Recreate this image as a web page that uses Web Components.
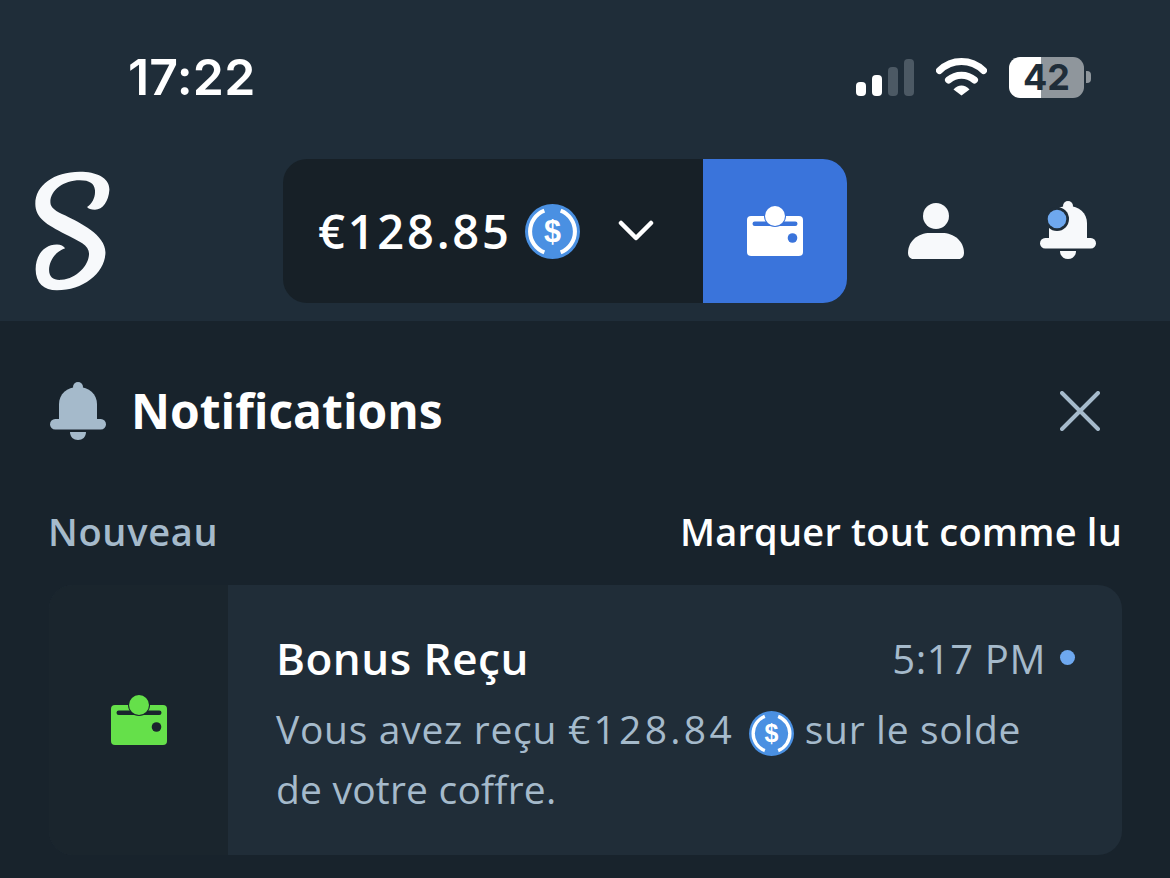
<!DOCTYPE html>
<html lang="fr">
<head>
<meta charset="utf-8">
<title>Notifications</title>
<style>
  html, body { margin: 0; background: #18232c; }
  body { font-family: "Open Sans", "Liberation Sans", sans-serif; width: 1170px; height: 878px; overflow: hidden; }
</style>
</head>
<body>
<app-screen>
  <status-bar></status-bar>
  <top-nav></top-nav>
  <notification-panel>
    <notification-card title="Bonus Reçu" time="5:17 PM">
      <div>Vous avez reçu <span style="letter-spacing:3.300px">€128.84</span> <usdc-icon size="45" style="margin-left:3px"></usdc-icon> sur le solde</div>
      <div style="letter-spacing:.2px">de votre coffre.</div>
    </notification-card>
  </notification-panel>
</app-screen>

<script>
class AppScreen extends HTMLElement {
  connectedCallback() {
    this.attachShadow({ mode: "open" });
    this.shadowRoot.innerHTML = `
      <style>
        :host { display: flex; flex-direction: column; width: 1170px; height: 878px; }
      </style>
      <slot></slot>
    `;
  }
}

class StatusBar extends HTMLElement {
  connectedCallback() {
    this.attachShadow({ mode: "open" });
    this.shadowRoot.innerHTML = `
      <style>
        :host { display: flex; align-items: flex-start; justify-content: space-between; height: 159px; box-sizing: border-box; padding: 47px 79px 0 128px; background: #1f2d39; color: #fff; }
        .time { font: 600 50px/60px Inter, "Liberation Sans", sans-serif; letter-spacing: .2px; }
        .icons { display: flex; align-items: flex-start; margin-top: 10px; }
        .signal { display: flex; align-items: flex-end; gap: 6px; height: 37px; margin-top: 2px; }
        .signal i { display: block; width: 10px; border-radius: 4px; background: #4c5964; }
        .signal i.on { background: #fff; }
        svg { display: block; margin-left: 22px; }
        .battery { display: flex; align-items: center; justify-content: center; width: 75px; height: 41px; margin-left: 22px; border-radius: 11px; background: linear-gradient(90deg, #fff 32px, #8f969c 32px); color: #1f2d39; font: 700 36px/41px Inter, "Liberation Sans", sans-serif; }
        .nub { width: 5px; height: 12px; margin: 14px 0 0 2px; border-radius: 0 4px 4px 0; background: #8f969c; }
      </style>
      <div class="time">17:22</div>
      <div class="icons">
        <div class="signal">
          <i class="on" style="height:14px"></i>
          <i class="on" style="height:21px"></i>
          <i style="height:29px"></i>
          <i style="height:37px"></i>
        </div>
        <svg width="51" height="39" viewBox="0 0 51 39" fill="none" stroke="#fff" stroke-width="7" stroke-linecap="round">
          <path d="M3.500 13.500C16 1.500 35 1.500 47.500 13.500"/>
          <path d="M12.500 23C20 16.500 31 16.500 38.500 23"/>
          <path d="M17.500 32.500C22 27 29 27 33.500 32.500L25.500 38.500Z" fill="#fff" stroke="none"/>
        </svg>
        <div class="battery">42</div>
        <div class="nub"></div>
      </div>
    `;
  }
}

class UsdcIcon extends HTMLElement {
  connectedCallback() {
    const size = this.getAttribute("size") || 54;
    this.attachShadow({ mode: "open" });
    this.shadowRoot.innerHTML = `
      <style>
        :host { display: inline-block; width: ${size}px; height: ${size}px; vertical-align: middle; line-height: 0; letter-spacing: 0; }
        svg { display: block; width: 100%; height: 100%; }
        text { font: 700 30px "Liberation Sans", sans-serif; fill: #fff; }
      </style>
      <svg viewBox="0 0 54 54">
        <circle cx="27" cy="27" r="27" fill="#4a90e2"/>
        <path d="M19 6.500A22 22 0 0 0 19 47.500M35 6.500A22 22 0 0 1 35 47.500" fill="none" stroke="#fff" stroke-width="4"/>
        <text x="27" y="37.500" text-anchor="middle">$</text>
      </svg>
    `;
  }
}

class WalletIcon extends HTMLElement {
  connectedCallback() {
    const color = this.getAttribute("color") || "#fff";
    const cut = this.getAttribute("cut") || "#3a74db";
    this.attachShadow({ mode: "open" });
    this.shadowRoot.innerHTML = `
      <style>
        :host { display: block; width: 56px; height: 50px; }
        svg { display: block; }
      </style>
      <svg width="56" height="50" viewBox="0 0 56 50">
        <rect x="0" y="10" width="56" height="40" rx="4" fill="${color}"/>
        <rect x="5.500" y="15.500" width="45" height="4.500" rx="2.200" fill="${cut}"/>
        <circle cx="28" cy="10" r="11" fill="${cut}"/>
        <circle cx="28" cy="10" r="10" fill="${color}"/>
        <circle cx="45.500" cy="32" r="4.800" fill="${cut}"/>
      </svg>
    `;
  }
}

class BellIcon extends HTMLElement {
  connectedCallback() {
    const color = this.getAttribute("color") || "#fff";
    const badge = this.hasAttribute("badge");
    this.attachShadow({ mode: "open" });
    this.shadowRoot.innerHTML = `
      <style>
        :host { display: block; width: 56px; height: 58px; }
        svg { display: block; }
      </style>
      <svg width="56" height="58" viewBox="0 0 56 58" fill="${color}">
        <circle cx="28" cy="5" r="5"/>
        <path d="M9 41V22C9 12 17 5 28 5C39 5 47 12 47 22V41Z"/>
        <rect x="0" y="37" width="56" height="10.500" rx="5.200"/>
        <path d="M20 50H36C36 55 32.500 58 28 58C23.500 58 20 55 20 50Z"/>
        ${badge ? `<circle cx="17" cy="18" r="12" fill="#1f2d39"/><circle cx="17" cy="18" r="9.300" fill="#6ea8ef"/>` : ""}
      </svg>
    `;
  }
}

class TopNav extends HTMLElement {
  connectedCallback() {
    this.attachShadow({ mode: "open" });
    this.shadowRoot.innerHTML = `
      <style>
        :host { display: flex; align-items: flex-start; height: 162px; background: #1f2d39; box-sizing: border-box; padding-left: 34px; }
        .logo { display: block; width: 77px; height: 122px; margin-top: 11px; }
        balance-pill { margin-left: 172px; }
        .person { display: block; margin: 44px 0 0 61px; }
        bell-icon { margin: 42px 0 0 76px; }
      </style>
      <svg class="logo" viewBox="100 60 235 366">
        <path fill="#f7f9fb" d="M240 62C290 62 332 80 330 118C328 152 310 178 286 178C274 178 266 176 262 170C278 160 288 140 286 118C284 98 270 88 240 88C190 88 150 118 150 155C150 172 166 182 196 196C240 218 320 256 318 310C316 372 250 424 170 424C130 424 105 402 105 360C105 318 130 284 170 284C182 284 190 288 195 296C170 304 146 330 146 362C146 384 160 394 184 392C232 388 268 346 268 312C268 286 238 274 194 252C140 224 104 204 104 160C104 104 160 62 240 62Z"/>
      </svg>
      <balance-pill></balance-pill>
      <svg class="person" width="56" height="56" viewBox="0 0 56 56" fill="#f7f9fb">
        <circle cx="28" cy="13" r="13"/>
        <path d="M0 50C0 38 10 30 22 30H34C46 30 56 38 56 50C56 53 54 56 51 56H5C2 56 0 53 0 50Z"/>
      </svg>
      <bell-icon badge color="#f7f9fb"></bell-icon>
    `;
  }
}

class BalancePill extends HTMLElement {
  connectedCallback() {
    this.attachShadow({ mode: "open" });
    this.shadowRoot.innerHTML = `
      <style>
        :host { display: flex; width: 564px; height: 144px; border-radius: 24px; overflow: hidden; background: #172027; }
        .amount { display: flex; align-items: center; width: 420px; box-sizing: border-box; padding-left: 35px; color: #fff; font-weight: 600; font-size: 47px; }
        .amount span { width: 192px; flex: none; white-space: nowrap; letter-spacing: 2.800px; }
        usdc-icon { margin-left: 15px; }
        .chevron { display: block; margin-left: 38px; }
        .wallet { display: flex; align-items: center; justify-content: center; width: 144px; background: #3a74db; }
      </style>
      <div class="amount">
        <span>€128.85</span>
        <usdc-icon size="55"></usdc-icon>
        <svg class="chevron" width="36" height="22" viewBox="0 0 36 22" fill="none" stroke="#fff" stroke-width="4.500" stroke-linecap="round" stroke-linejoin="round">
          <path d="M3 3L18 18L33 3"/>
        </svg>
      </div>
      <div class="wallet"><wallet-icon></wallet-icon></div>
    `;
  }
}

class NotificationPanel extends HTMLElement {
  connectedCallback() {
    this.attachShadow({ mode: "open" });
    this.shadowRoot.innerHTML = `
      <style>
        :host { display: block; flex: 1; box-sizing: border-box; padding: 60px 48px 0 49px; background: #18232c; }
        .head { display: flex; align-items: center; height: 60px; }
        bell-icon { margin-left: 1px; }
        h1 { flex: 1; margin: 0 0 0 25px; color: #fff; font-size: 48px; font-weight: 700; line-height: 60px; }
        .close { display: block; margin-right: 22px; }
        .sub { display: flex; justify-content: space-between; margin: 70px 0 34px; font-size: 38px; line-height: 40px; font-weight: 600; letter-spacing: .2px; }
        .new { margin-left: -1px; color: #a5bacb; letter-spacing: .7px; }
        .mark { color: #fff; }
      </style>
      <div class="head">
        <bell-icon color="#a5bacb"></bell-icon>
        <h1>Notifications</h1>
        <svg class="close" width="40" height="40" viewBox="0 0 40 40" fill="none" stroke="#a5bacb" stroke-width="4" stroke-linecap="round">
          <path d="M2 2L38 38M38 2L2 38"/>
        </svg>
      </div>
      <div class="sub">
        <span class="new">Nouveau</span>
        <span class="mark">Marquer tout comme lu</span>
      </div>
      <slot></slot>
    `;
  }
}

class NotificationCard extends HTMLElement {
  connectedCallback() {
    this.attachShadow({ mode: "open" });
    this.shadowRoot.innerHTML = `
      <style>
        :host { display: flex; height: 270px; border-radius: 24px; overflow: hidden; background: #202d38; }
        .side { display: flex; align-items: center; justify-content: center; flex: none; width: 179px; background: #1a252d; }
        .main { flex: 1; box-sizing: border-box; padding: 48px 47px 0 48px; }
        .top { display: flex; align-items: center; height: 50px; }
        .title { flex: 1; color: #fff; font-size: 44px; font-weight: 600; letter-spacing: .5px; }
        .time { color: #a5bacb; font-size: 40px; letter-spacing: .6px; }
        .dot { width: 15px; height: 15px; margin: 0 0 2px 14px; border-radius: 50%; background: #6ea8ef; }
        .body { margin-top: 16px; color: #a5bacb; font-size: 39px; line-height: 60px; letter-spacing: .7px; white-space: nowrap; }
        ::slotted(div) { height: 60px; }
      </style>
      <div class="side"><wallet-icon color="#65e04a" cut="#1a252d"></wallet-icon></div>
      <div class="main">
        <div class="top">
          <span class="title">${this.getAttribute("title")}</span>
          <span class="time">${this.getAttribute("time")}</span>
          <span class="dot"></span>
        </div>
        <div class="body"><slot></slot></div>
      </div>
    `;
  }
}

customElements.define("app-screen", AppScreen);
customElements.define("status-bar", StatusBar);
customElements.define("usdc-icon", UsdcIcon);
customElements.define("wallet-icon", WalletIcon);
customElements.define("bell-icon", BellIcon);
customElements.define("top-nav", TopNav);
customElements.define("balance-pill", BalancePill);
customElements.define("notification-panel", NotificationPanel);
customElements.define("notification-card", NotificationCard);
</script>
</body>
</html>
